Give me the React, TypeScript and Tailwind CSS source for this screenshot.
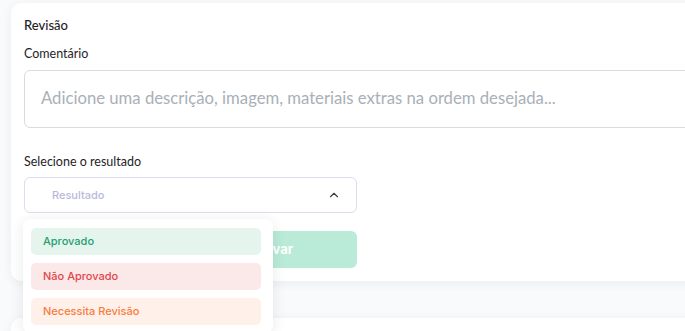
import { ChevronUp } from "lucide-react";

const OPTIONS = [
  { label: "Aprovado", cls: "bg-[#e5f5ee] text-[#23a06f]" },
  { label: "Não Aprovado", cls: "bg-[#fbe8e8] text-[#e0464b]" },
  { label: "Necessita Revisão", cls: "bg-[#fff0e9] text-[#f77c3e]" },
];

export default function App() {
  return (
    <div className="relative w-[685px] h-[331px] overflow-hidden bg-[#f9fafb] pl-[11px] pt-[3px] font-['Lato',sans-serif]">
      {/* Card */}
      <div className="w-[720px] bg-white rounded-[10px] shadow-[0_2px_12px_rgba(30,41,59,0.06)] px-[13px] pt-[13px] pb-[13px]">
        <h3 className="text-[13px] leading-[18px] font-medium text-[#1f2328]">Revisão</h3>

        <label className="block mt-[11px] text-[12.5px] leading-[18px] text-[#1f2328]">
          Comentário
        </label>
        <div className="mt-[7px] h-[58px] w-[700px] rounded-[6px] border border-[#d9dbde] flex items-center pl-[16px]">
          <span className="text-[16.7px] text-[#a9b0b8]">
            Adicione uma descrição, imagem, materiais extras na ordem desejada...
          </span>
        </div>

        <label className="block mt-[25px] text-[12.5px] leading-[18px] text-[#1f2328]">
          Selecione o resultado
        </label>

        <div className="relative w-[333px]">
          <div className="mt-[6px] h-[36px] rounded-[6px] border border-[#dedcef] flex items-center justify-between pl-[27px] pr-[15px]">
            <span className="font-['Inter',sans-serif] text-[11px] font-medium text-[#b9b8db]">
              Resultado
            </span>
            <ChevronUp size={14} strokeWidth={2} className="text-[#3a3f4a]" />
          </div>

          <div className="flex justify-end mt-[18px]">
            <button className="w-[168px] h-[37px] rounded-[6px] bg-[#b9ebd8] text-white text-[13px] font-bold font-['Inter',sans-serif]">
              Salvar
            </button>
          </div>

          {/* Dropdown */}
          <div className="absolute left-[-1px] top-[42px] w-[250px] bg-white rounded-[8px] shadow-[0_2px_14px_rgba(30,41,59,0.10)] pl-[8px] pr-[12px] pt-[9px] pb-[8px] flex flex-col gap-[8px] font-['Inter',sans-serif]">
            {OPTIONS.map((o) => (
              <div
                key={o.label}
                className={`h-[27px] rounded-[5px] flex items-center pl-[12px] text-[11px] font-medium ${o.cls}`}
              >
                {o.label}
              </div>
            ))}
          </div>
        </div>
      </div>

      {/* Next card */}
      <div className="mt-[37px] w-[720px] h-[60px] bg-white rounded-[10px] shadow-[0_2px_12px_rgba(30,41,59,0.06)]" />
    </div>
  );
}
